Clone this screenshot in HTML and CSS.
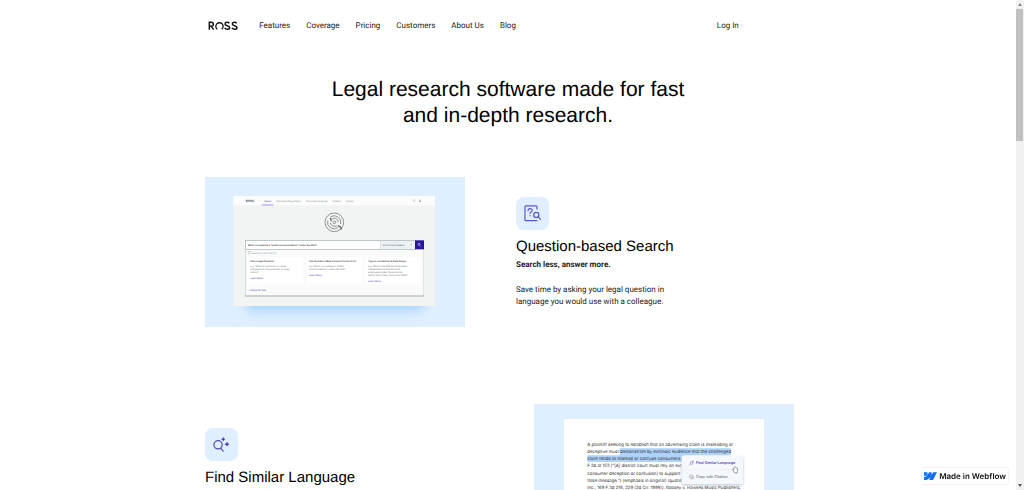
FILE: index.html
```html
<!DOCTYPE html>
<html lang="en">
<head>
<meta charset="utf-8">
<title>ROSS Features</title>
<link rel="stylesheet" href="styles.css">
</head>
<body>
<div class="page">
  <header class="header">
    <a class="brand" href="#" aria-label="ROSS">
      <svg viewBox="0 0 90 28" aria-hidden="true" fill="none" stroke="#151515" stroke-width="4.6">
        <path d="M4 26V4h6a6 6 0 0 1 0 12H4M10 16l7 10"/>
        <path d="M28 25a11 11 0 1 1 13 0" stroke-width="4"/>
        <path d="M64 7C61 3 51 2 51 9c0 7 14 4 14 11 0 6-11 6-15 1"/>
        <path d="M86 7C83 3 73 2 73 9c0 7 14 4 14 11 0 6-11 6-15 1"/>
      </svg>
    </a>
    <nav class="nav">
      <a href="#">Features</a>
      <a href="#">Coverage</a>
      <a href="#">Pricing</a>
      <a href="#">Customers</a>
      <a href="#">About Us</a>
      <a href="#">Blog</a>
    </nav>
    <a class="login" href="#">Log In</a>
  </header>

  <main class="main">
    <h1 class="title">Legal research software made for fast and in-depth research.</h1>

    <section class="feature">
      <svg class="shot" viewBox="0 0 780 451" role="img" aria-label="Question search screen">
        <defs>
          <filter id="glow" x="-20%" y="-20%" width="140%" height="140%"><feGaussianBlur stdDeviation="16"/></filter>
          <filter id="soft" x="-10%" y="-10%" width="120%" height="120%"><feGaussianBlur stdDeviation="2"/></filter>
        </defs>
        <rect width="780" height="451" fill="#dfefff"/>
        <rect x="125" y="90" width="530" height="312" fill="#a8d4fb" filter="url(#glow)"/>
        <rect x="85" y="57" width="605" height="330" fill="#f2f4f4"/>
        <rect x="85" y="57" width="605" height="28" fill="#fcfcfd"/>
        <g class="shot-nav">
          <text x="122" y="74" class="shot-brand">ROSS</text>
          <text x="178" y="74" class="shot-link">Cases</text>
          <text x="213" y="74">Statutes &amp; Regulations</text>
          <text x="303" y="74">Document Analyzer</text>
          <text x="383" y="74">Folders</text>
          <text x="423" y="74">History</text>
        </g>
        <path d="M163 65v12" stroke="#ddd"/>
        <path d="M170 84h35" stroke="#7060d0" stroke-width="2"/>
        <circle cx="627" cy="71" r="3" fill="none" stroke="#999"/>
        <path d="M642 75a3 3 0 0 1 6 0zM643 68h4v3h-4z" fill="#999"/>
        <g fill="none" stroke="#808080" stroke-width="2.500">
          <circle cx="388" cy="136" r="28"/>
          <path d="M376 120a20 20 0 0 1 31 21M399 152a20 20 0 0 1-31-21"/>
          <path d="M380 126a13 13 0 0 1 20 9M396 146a13 13 0 0 1-20-9"/>
          <circle cx="388" cy="136" r="4"/>
          <path d="m376 123 3 9M399 146l9 5m0 0v7" stroke="#666" stroke-width="4"/>
        </g>
        <rect x="121" y="191" width="536" height="168" fill="#b4bec3" filter="url(#soft)"/>
        <rect x="122" y="191" width="534" height="164" fill="#fafafb"/>
        <rect x="121" y="191" width="510" height="26" fill="#fff" stroke="#a5b1b6" stroke-width="2"/>
        <rect x="526" y="192" width="104" height="24" fill="#edf1f4"/>
        <path d="M526 192v24" stroke="#a5afb5"/>
        <rect x="630" y="190" width="27" height="27" fill="#28169a"/>
        <circle cx="642" cy="202" r="3" fill="none" stroke="#fff" stroke-width="1.500"/>
        <path d="m644 205 4 4" stroke="#fff" stroke-width="1.500"/>
        <text x="128" y="207" class="shot-query">When is a website a “public accommodation” under the ADA?</text>
        <text x="533" y="207" class="shot-query-light">All Courts &amp; Federal</text>
        <path d="m617 202 2 3 2-3" fill="#777"/>
        <rect x="131" y="224" width="5" height="7" fill="none" stroke="#90a6bc"/>
        <text x="140" y="230" class="shot-tips">SEARCHING, LONG FORM TIPS</text>
        <g fill="#fff">
          <rect x="129" y="241" width="166" height="82"/>
          <rect x="305" y="241" width="166" height="82"/>
          <rect x="481" y="241" width="166" height="82"/>
        </g>
        <g class="shot-title">
          <text x="136" y="254">Ask a Legal Question</text>
          <text x="312" y="254">Use Quotation Marks Around Terms of Art</text>
          <text x="489" y="254">Type in Jurisdiction &amp; Date Range</text>
        </g>
        <g class="shot-copy">
          <text x="136" y="269">e.g. When is a contract or verbal</text>
          <text x="136" y="278">employee for the purposes of wage</text>
          <text x="136" y="287">claims?</text>
          <text x="312" y="269">e.g. When is a website a “public</text>
          <text x="312" y="278">accommodation” under the ADA?</text>
          <text x="489" y="269">e.g. What is the difference between</text>
          <text x="489" y="278">independent contractors and</text>
          <text x="489" y="287">employees under the economic</text>
          <text x="489" y="296">reality test in New York since 2008?</text>
        </g>
        <g class="shot-link">
          <text x="136" y="305">Learn More</text>
          <text x="312" y="296">Learn More</text>
          <text x="489" y="314">Learn More</text>
          <text x="131" y="343">+ Show All Tips</text>
        </g>
      </svg>
      <div class="copy">
        <svg class="icon" viewBox="0 0 96 96" aria-hidden="true">
          <rect width="96" height="96" rx="23" fill="#dfefff"/>
          <g fill="none" stroke="#5f57c4" stroke-width="3.500" stroke-linecap="round" stroke-linejoin="round">
            <path d="M61 35v-6q0-3-3-3H29q-3 0-3 3v37q0 3 3 3h32"/>
            <path d="M35 40c0-8 12-8 12-1 0 5-6 4-6 9M41 54v.5"/>
            <circle cx="59" cy="52" r="7.500"/>
            <path d="m65 58 6 7"/>
          </g>
        </svg>
        <h2 class="heading">Question-based Search</h2>
        <p class="lead">Search less, answer more.</p>
        <p class="text">Save time by asking your legal question in language you would use with a colleague.</p>
      </div>
    </section>

    <section class="feature feature-reverse">
      <div class="copy">
        <svg class="icon" viewBox="0 0 96 96" aria-hidden="true">
          <rect width="96" height="96" rx="23" fill="#dfefff"/>
          <g fill="none" stroke="#5148b8" stroke-width="3.500" stroke-linecap="round">
            <circle cx="38" cy="49" r="12"/>
            <path d="m46 59 7 8"/>
          </g>
          <path d="m53 27 1.500 4 4 1.500-4 1.500-1.500 4-1.500-4-4-1.500 4-1.500zM64 41l2 4.500 4.500 1.500-4.500 1.500-2 4.500-2-4.500-4.500-1.500 4.500-1.500z" fill="#3020a8" stroke="#3020a8"/>
        </svg>
        <h2 class="heading">Find Similar Language</h2>
      </div>
      <svg class="shot" viewBox="0 0 780 451" role="img" aria-label="Selected passage with a menu">
        <defs><filter id="menu-shadow" x="-10%" y="-20%" width="120%" height="150%"><feGaussianBlur stdDeviation="5"/></filter></defs>
        <rect width="780" height="451" fill="#dfefff"/>
        <rect x="90" y="45" width="600" height="406" fill="#fff"/>
        <path d="M257 133h333v21H257zM160 154h288v20H160z" fill="#afd2fb"/>
        <g class="passage">
          <text x="160" y="127">A plaintiff seeking to establish that an advertising claim is misleading or</text>
          <text x="160" y="148">deceptive must demonstrate by extrinsic evidence that the challenged</text>
          <text x="160" y="169">claim tends to mislead or confuse consumers.</text>
          <text x="160" y="190">F.3d at 153 (“[A]  district court must rely on ext</text>
          <text x="160" y="212">consumer deception or  confusion] to support</text>
          <text x="160" y="233">false message.”) (emphasis in original) (quoting</text>
          <text x="160" y="254">Inc., 169 F.3d 218, 229 (2d Cir. 1999)), Boosey v. Hawkes Music Publishers,</text>
        </g>
        <rect x="443" y="161" width="184" height="82" rx="3" fill="#899bb0" opacity=".6" filter="url(#menu-shadow)"/>
        <rect x="443" y="156" width="184" height="84" rx="3" fill="#f4f8fc"/>
        <path d="M443 197h184" stroke="#e3e9ef"/>
        <text x="486" y="181" class="menu-active">Find Similar Language</text>
        <text x="486" y="222" class="menu-item">Copy with Citation</text>
        <g fill="none" stroke="#6658c7" stroke-width="1.500"><circle cx="473" cy="177" r="4"/><path d="m470 180-4 4m11-14v4m-2-2h4"/></g>
        <g fill="none" stroke="#888" stroke-width="1.500"><rect x="467" y="213" width="8" height="8" rx="1"/><path d="M470 224h8v-8"/></g>
        <path d="m601 206-5-9q0-4 4-1v-6q2-4 4 0l6 3 1 7-2 7z" fill="#fff" stroke="#666" stroke-width="2"/>
      </svg>
    </section>
  </main>
</div>

<a class="badge" href="#">
  <svg viewBox="0 4 24 16" aria-hidden="true"><path fill="#146ef5" d="m24 4.515-7.658 14.970H9.149l3.205-6.204h-.144C9.566 16.713 5.621 18.973 0 19.485v-6.118s3.596-.213 5.710-2.435H0V4.515h6.417v5.278l.144-.001 2.622-5.277h4.854v5.244h.144l2.720-5.244H24Z"/></svg>
  <span>Made in Webflow</span>
</a>
<div class="scrollbar" aria-hidden="true">
  <svg viewBox="0 0 8 8"><path d="m4 3 2 3H2z" fill="#888"/></svg>
  <div class="track"><div class="thumb"></div></div>
  <svg viewBox="0 0 8 8"><path d="m4 5 2-3H2z" fill="#555"/></svg>
</div>
</body>
</html>
```
FILE: styles.css
```css
* { box-sizing: border-box; }
html { height: 100%; }
body {
  margin: 0;
  height: 100%;
  overflow: hidden;
  background: #fff;
  color: #222;
  font: 8px/12px Roboto, Inter, sans-serif;
  text-rendering: geometricPrecision;
}
a { color: inherit; text-decoration: none; }
svg { display: block; }
.page { padding-right: 8px; }
.header {
  display: flex;
  align-items: center;
  width: 60%;
  min-width: 600px;
  height: 52px;
  margin: 0 auto;
  padding-right: 74px;
}
.brand { width: 30px; margin-left: 5px; }
.nav { display: flex; gap: 16px; margin-left: 21px; }
.login { margin-left: auto; }
.main { width: 606px; max-width: 100%; margin: 0 auto; }
.title {
  max-width: 372px;
  margin: 25px auto 48px;
  font: 400 21px/26px "Liberation Sans", Arial, sans-serif;
  text-align: center;
  color: #000;
}
.feature {
  display: grid;
  grid-template-columns: 260px 1fr;
  column-gap: 51px;
  align-items: center;
  margin-bottom: 77px;
}
.feature-reverse { grid-template-columns: 1fr 260px; padding-right: 17px; align-items: start; }
.feature-reverse .copy { padding-top: 24px; }
.shot { width: 100%; font-family: Inter, sans-serif; }
.icon { width: 33px; height: 33px; }
.heading {
  margin: 7px 0 2px;
  font: 400 15px/20px "Liberation Sans", Arial, sans-serif;
  color: #000;
}
.lead { margin: 0 0 13px; font-weight: 700; }
.text { max-width: 156px; margin: 0; }
.shot-nav { font-size: 7px; fill: #8b9292; }
.shot-brand { font-size: 9px; font-weight: 700; fill: #555; }
.shot-link { font-size: 7px; font-weight: 500; fill: #6255bd; }
.shot-query { font-size: 7px; font-weight: 600; fill: #444; }
.shot-query-light { font-size: 7px; fill: #58656c; }
.shot-title { font-size: 7px; font-weight: 600; fill: #444; }
.shot-copy { font-size: 7px; fill: #7c8486; }
.shot-tips { font-size: 5px; fill: #7c8c98; }
.passage { font-size: 13px; fill: #333; }
.menu-active { font-size: 11px; font-weight: 600; fill: #5947b5; }
.menu-item { font-size: 11px; fill: #555; }
.badge {
  position: fixed;
  right: 16px;
  bottom: 6px;
  display: flex;
  align-items: center;
  gap: 2px;
  height: 16px;
  padding: 0 2px;
  border-radius: 2px;
  background: #fff;
  box-shadow: 0 0 2px #0003;
  color: #111;
  font-family: Inter, sans-serif;
  font-weight: 600;
}
.badge svg { width: 13px; }
.scrollbar {
  position: fixed;
  inset: 0 0 0 auto;
  display: flex;
  flex-direction: column;
  width: 8px;
  background: #f1f1f1;
}
.track { flex: 1; padding: 1px 1px 0 0; }
.thumb { height: 28%; background: #c1c1c1; }
```
